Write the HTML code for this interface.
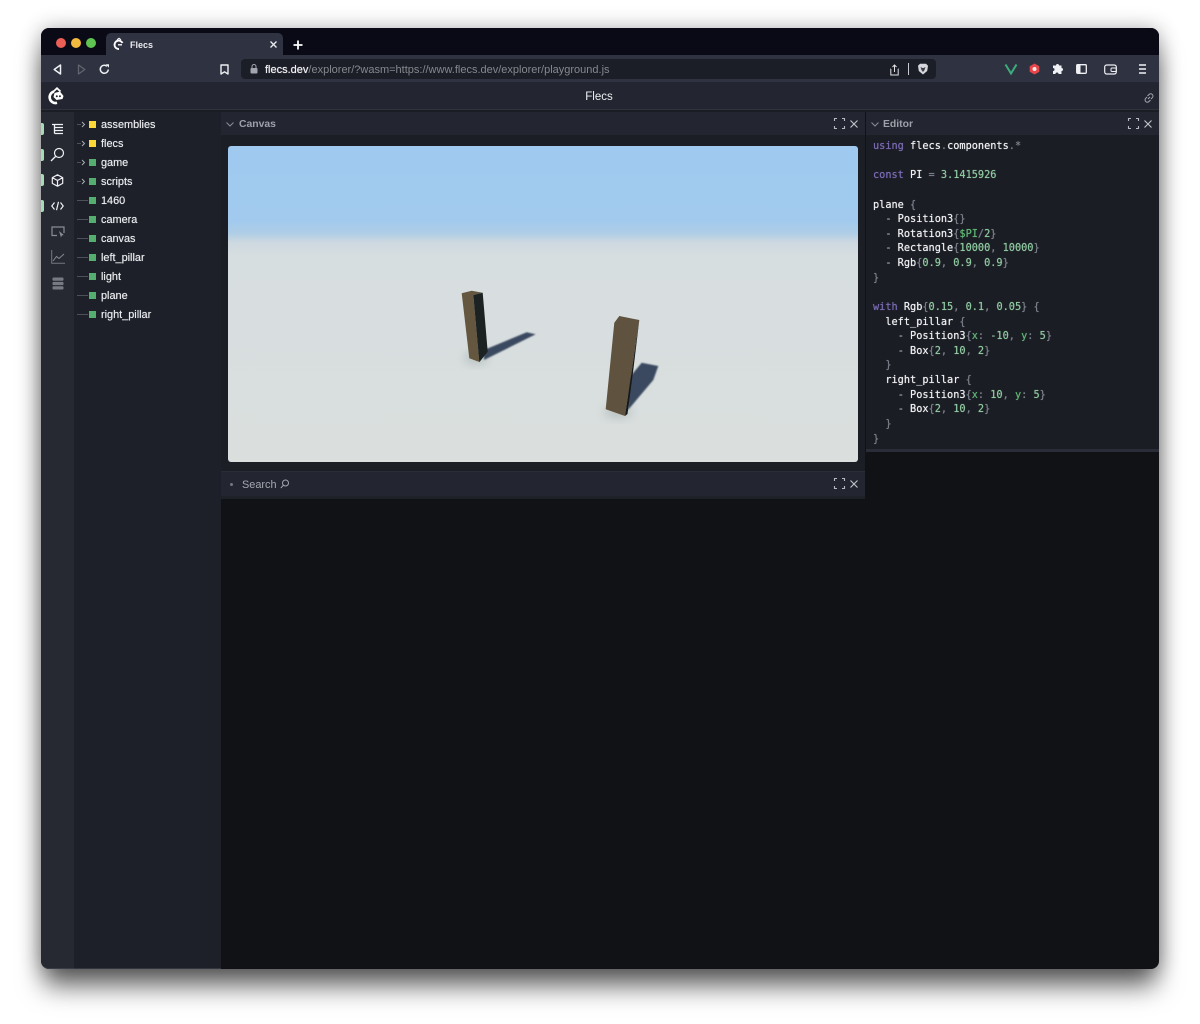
<!DOCTYPE html>
<html><head><meta charset="utf-8"><title>Flecs</title>
<style>
html,body{margin:0;padding:0;width:1200px;height:1024px;overflow:hidden;background:#fff}
*{box-sizing:border-box}
body{font-family:"Liberation Sans",sans-serif;position:relative}
.a{position:absolute}
#win{left:41px;top:28px;width:1118px;height:941px;border-radius:8px;overflow:hidden;background:#111216;box-shadow:0 20px 26px -3px rgba(0,0,0,.6),0 0 20px rgba(0,0,0,.3)}
.t{position:absolute;left:101px;color:#eceef2;font-size:10.9px;line-height:14px;white-space:nowrap;text-shadow:0 0 .6px rgba(236,238,242,.8)}
.sq{position:absolute;left:89px;width:7px;height:7px;background:#56ad70}
.y{background:#fbd738}
.ln{position:absolute;left:77px;width:11px;height:1px;background:#4d505a}
.ind{position:absolute;left:41px;width:3px;height:12px;background:#a5dcb4;border-radius:0 2px 2px 0}
.code{position:absolute;left:873px;top:139px;margin:0;font:10.25px/14.63px "DejaVu Sans Mono","Liberation Mono",monospace;color:#eef0f3;white-space:pre;text-shadow:0 0 .6px currentColor}
.k{color:#7a6bb5}.n{color:#8fc9a0}.g{color:#7d818b}.v{color:#5fb574}.d{color:#a9acb3}
.ph{position:absolute;color:#9ea1aa;font-size:10.4px;font-weight:bold}
svg{position:absolute;overflow:visible}
</style></head>
<body>
<div class="a" id="win"></div>
<!-- chrome -->
<div class="a" style="left:41px;top:28px;width:1118px;height:27px;background:#0a0a16;border-radius:8px 8px 0 0"></div>
<div class="a" style="left:106px;top:33px;width:177px;height:22px;background:#2f3241;border-radius:5px 5px 0 0"></div>
<div class="a" style="left:41px;top:55px;width:1118px;height:27px;background:#2f3241"></div>
<div class="a" style="left:41px;top:82px;width:1118px;height:27px;background:#232630"></div>
<div class="a" style="left:41px;top:109px;width:1118px;height:3px;background:#1b1d24;border-top:1px solid #30333d"></div>
<div class="a" style="left:56px;top:37.500px;width:10px;height:10px;border-radius:50%;background:#ec5f57"></div>
<div class="a" style="left:71px;top:37.500px;width:10px;height:10px;border-radius:50%;background:#f4b93f"></div>
<div class="a" style="left:86px;top:37.500px;width:10px;height:10px;border-radius:50%;background:#5fc452"></div>
<svg style="left:113px;top:38px" width="12" height="13" viewBox="0 0 12 13"><path d="M9.500 5A4.200 4.200 0 1 0 6 11" fill="none" stroke="#fff" stroke-width="1.900"/><path d="M4 1.800l2-1.500 2 1.500" fill="none" stroke="#fff" stroke-width="1.100"/><path d="M5 6.800h4" stroke="#fff" stroke-width="1.300"/></svg>
<div class="a" style="left:130px;top:39px;color:#e9ebef;font-size:9px;font-weight:bold;line-height:13px">Flecs</div>
<svg style="left:270px;top:41px" width="7" height="7"><path d="M.5.500l6 6M6.500.500l-6 6" stroke="#eceef2" stroke-width="1.300"/></svg>
<svg style="left:293px;top:40px" width="10" height="10"><path d="M5 .5v9M.5 5h9" stroke="#fff" stroke-width="1.800"/></svg>
<!-- nav icons -->
<svg style="left:53px;top:64px" width="9" height="11"><path d="M7.500 1L1.200 5.500 7.500 10z" fill="none" stroke="#eef0f3" stroke-width="1.500" stroke-linejoin="round"/></svg>
<svg style="left:77px;top:64px" width="9" height="11"><path d="M1.500 1L7.800 5.500 1.500 10z" fill="none" stroke="#62656f" stroke-width="1.300" stroke-linejoin="round"/></svg>
<svg style="left:99px;top:64px" width="11" height="11"><path d="M9.300 5.500A4 4 0 1 1 8 2.300" fill="none" stroke="#eef0f3" stroke-width="1.500"/><path d="M6.800 .3h3.200v3.400z" fill="#eef0f3"/></svg>
<svg style="left:220px;top:64px" width="9" height="11"><path d="M1 1h7v9L4.500 7.800 1 10z" fill="none" stroke="#eef0f3" stroke-width="1.400" stroke-linejoin="round"/></svg>
<div class="a" style="left:241px;top:59px;width:695px;height:20px;background:#1c1e27;border-radius:4px"></div>
<svg style="left:250px;top:64px" width="8" height="10"><rect x=".5" y="4" width="7" height="5.500" rx="1" fill="#a2a5ad"/><path d="M2 4V2.500a2 2 0 0 1 4 0V4" fill="none" stroke="#a2a5ad"/></svg>
<div class="a" style="left:265px;top:63px;font-size:11px;line-height:14px;color:#85888f;white-space:nowrap"><span style="color:#f0f1f4;text-shadow:0 0 .6px #f0f1f4">flecs.dev</span>/explorer/?wasm=https://www.flecs.dev/explorer/playground.js</div>
<svg style="left:890px;top:64px" width="9" height="12"><path d="M1 5H.8v6h7.400V5H8M4.500 8V1M2.500 3l2-2 2 2" fill="none" stroke="#dfe1e5" stroke-width="1"/></svg>
<div class="a" style="left:908px;top:63px;width:1px;height:12px;background:#c9cbd0"></div>
<svg style="left:917px;top:63px" width="12" height="12"><path d="M3 .7h6l2 2-.8 5.300L6 11.500 1.800 8 1 2.700z" fill="#d5d7dc"/><path d="M3.500 4l2 1h1l2-1-1 3-1.500 2-1.500-2z" fill="#3a3d48"/></svg>
<svg style="left:1005px;top:64px" width="12" height="10"><path d="M.5.500L6 9.500 11.500.500" fill="none" stroke="#3dad7c" stroke-width="2"/></svg>
<svg style="left:1029px;top:63px" width="11" height="12"><path d="M5.500.5l4.800 2.800v5.400L5.500 11.500.7 8.700V3.300z" fill="#e7474a"/><circle cx="5.500" cy="6" r="2" fill="#f4e9e6"/></svg>
<svg style="left:1052px;top:63px" width="12" height="12"><path d="M4 2.500a1.500 1.500 0 0 1 3 0h2.500V5a1.500 1.500 0 0 1 0 3v3H6.500a1.500 1.500 0 0 0-3 0H1V8a1.500 1.500 0 0 0 0-3V2.500z" fill="#f0f1f4"/></svg>
<svg style="left:1076px;top:64px" width="11" height="10"><rect x=".7" y=".7" width="9.600" height="8.600" rx="1" fill="none" stroke="#f0f1f4" stroke-width="1.300"/><rect x="1" y="1" width="3.500" height="8" fill="#f0f1f4"/></svg>
<svg style="left:1104px;top:64px" width="13" height="11"><rect x=".7" y="1" width="11.600" height="9" rx="2" fill="none" stroke="#eef0f3" stroke-width="1.200"/><rect x="7" y="4" width="5.300" height="3.500" rx="1" fill="none" stroke="#eef0f3"/></svg>
<svg style="left:1138px;top:64px" width="9" height="10"><path d="M1 1h7M1 5h7M1 9h7" stroke="#f0f1f4" stroke-width="1.500"/></svg>
<!-- app header -->
<svg style="left:49px;top:87px" width="16" height="18" viewBox="0 0 16 18"><path d="M5 4.500A5.700 5.700 0 0 0 8 15.800" fill="none" stroke="#fff" stroke-width="2.600"/><path d="M4.500 4.500L8 1.200l3.500 3.300" fill="none" stroke="#fff" stroke-width="1.800"/><path d="M11 4.500l3.500 4.500-1 3-6 1-3-3 1-4z" fill="#fff"/><circle cx="7.800" cy="9.300" r="1" fill="#232630"/><circle cx="10.900" cy="9.300" r="1" fill="#232630"/></svg>
<div class="a" style="left:0;width:1198px;top:90px;text-align:center;color:#eceef2;font-size:11.500px;line-height:14px">Flecs</div>
<svg style="left:1143px;top:92px" width="12" height="12" viewBox="0 0 12 12"><path d="M5 7l2-2M4.500 4L6 2.500a2 2 0 0 1 3.300 3.200L8 7M7.500 8L6 9.500a2 2 0 0 1-3.300-3.200L4 5" fill="none" stroke="#a5a8b0" stroke-width="1"/></svg>
<!-- left rail -->
<div class="a" style="left:41px;top:112px;width:33px;height:857px;background:#262932;border-bottom-left-radius:8px;border-bottom:1px solid #3a3d47"></div>
<div class="ind" style="top:123px"></div><div class="ind" style="top:149px"></div><div class="ind" style="top:174px"></div><div class="ind" style="top:200px"></div>
<svg style="left:51px;top:123px" width="13" height="13"><path d="M1 1.500h11M3.500 4.500H12M3.500 7.500H12M3.500 10.500H12M3.500 1.500v9" fill="none" stroke="#eef0f3" stroke-width="1.300"/></svg>
<svg style="left:50px;top:147px" width="15" height="15"><circle cx="9" cy="6" r="4.500" fill="none" stroke="#eef0f3" stroke-width="1.200"/><path d="M5.500 9.500L1 14" stroke="#eef0f3" stroke-width="1.300"/></svg>
<svg style="left:51px;top:174px" width="13" height="13"><path d="M6.500.8l5.200 2.800v5.800l-5.200 2.800-5.200-2.800V3.600zM1.300 3.600l5.200 2.900 5.200-2.900M6.500 6.500v5.700" fill="none" stroke="#eef0f3" stroke-width="1.200" stroke-linejoin="round"/></svg>
<svg style="left:51px;top:201px" width="13" height="10"><path d="M3.500 1.500L.8 5l2.700 3.500M9.500 1.500L12.200 5 9.500 8.500M7.500.8L5.500 9.200" fill="none" stroke="#eef0f3" stroke-width="1.200"/></svg>
<svg style="left:51px;top:226px" width="14" height="13"><path d="M6 9.500H1V1h12v6" fill="none" stroke="#8a8d95" stroke-width="1.200"/><path d="M8 5l4.800 4-2 .5-.8 2z" fill="#8a8d95"/></svg>
<svg style="left:51px;top:250px" width="14" height="14"><path d="M.7 0v13.300H14" fill="none" stroke="#75787f" stroke-width="1"/><path d="M2 11l3.500-4.500 2.500 2L13 4" fill="none" stroke="#85888f" stroke-width="1"/></svg>
<svg style="left:52px;top:277px" width="12" height="13"><rect x=".5" y=".5" width="11" height="3.200" rx="1" fill="#777a82"/><rect x=".5" y="4.900" width="11" height="3.200" rx="1" fill="#777a82"/><rect x=".5" y="9.300" width="11" height="3.200" rx="1" fill="#777a82"/></svg>
<!-- tree -->
<div class="a" style="left:74px;top:112px;width:147px;height:857px;background:#1d2028;border-bottom:1px solid #33363f"></div>
<svg style="left:77px;top:121px" width="11" height="7"><path d="M0 3.500h4" stroke="#4d505a"/><path d="M5 1l2.500 2.500L5 6" fill="none" stroke="#a9acb3"/></svg>
<svg style="left:77px;top:140px" width="11" height="7"><path d="M0 3.500h4" stroke="#4d505a"/><path d="M5 1l2.500 2.500L5 6" fill="none" stroke="#a9acb3"/></svg>
<svg style="left:77px;top:159px" width="11" height="7"><path d="M0 3.500h4" stroke="#4d505a"/><path d="M5 1l2.500 2.500L5 6" fill="none" stroke="#a9acb3"/></svg>
<svg style="left:77px;top:178px" width="11" height="7"><path d="M0 3.500h4" stroke="#4d505a"/><path d="M5 1l2.500 2.500L5 6" fill="none" stroke="#a9acb3"/></svg>
<div class="sq y" style="top:120.500px"></div><div class="t" style="top:117.500px">assemblies</div>
<div class="sq y" style="top:139.500px"></div><div class="t" style="top:136.500px">flecs</div>
<div class="sq" style="top:158.500px"></div><div class="t" style="top:155.500px">game</div>
<div class="sq" style="top:177.500px"></div><div class="t" style="top:174.500px">scripts</div>
<div class="ln" style="top:200px"></div><div class="sq" style="top:196.500px"></div><div class="t" style="top:193.500px">1460</div>
<div class="ln" style="top:219px"></div><div class="sq" style="top:215.500px"></div><div class="t" style="top:212.500px">camera</div>
<div class="ln" style="top:238px"></div><div class="sq" style="top:234.500px"></div><div class="t" style="top:231.500px">canvas</div>
<div class="ln" style="top:257px"></div><div class="sq" style="top:253.500px"></div><div class="t" style="top:250.500px">left_pillar</div>
<div class="ln" style="top:276px"></div><div class="sq" style="top:272.500px"></div><div class="t" style="top:269.500px">light</div>
<div class="ln" style="top:295px"></div><div class="sq" style="top:291.500px"></div><div class="t" style="top:288.500px">plane</div>
<div class="ln" style="top:314px"></div><div class="sq" style="top:310.500px"></div><div class="t" style="top:307.500px">right_pillar</div>
<!-- canvas panel -->
<div class="a" style="left:221px;top:112px;width:644px;height:23px;background:#232630"></div>
<div class="a" style="left:221px;top:135px;width:644px;height:336px;background:#1c1e25"></div>
<svg style="left:226px;top:122px" width="8" height="5"><path d="M.5.500L4 4 7.500.500" fill="none" stroke="#8a8d95"/></svg>
<div class="ph" style="left:239px;top:118px;line-height:14px">Canvas</div>
<svg style="left:834px;top:118px" width="11" height="11"><path d="M.5 3V.5H3M8 .5h2.500V3M10.500 8v2.500H8M3 10.500H.5V8" fill="none" stroke="#b5b8bf" stroke-width="1.100"/></svg>
<svg style="left:850px;top:120px" width="8" height="8"><path d="M.5.500l7 7M7.500.500l-7 7" stroke="#c2c5cb" stroke-width="1.100"/></svg>
<svg style="left:228px;top:146px;border-radius:3px" width="630" height="316" viewBox="228 146 630 316">
<defs>
<linearGradient id="bg" x1="0" y1="0" x2="0" y2="1"><stop offset="0" stop-color="#9fc9ef"/><stop offset=".235" stop-color="#a1caee"/><stop offset=".275" stop-color="#aecde6"/><stop offset=".305" stop-color="#cdd8e0"/><stop offset=".35" stop-color="#d7dee0"/><stop offset="1" stop-color="#dadfdd"/></linearGradient>
<filter id="b" x="-20%" y="-20%" width="140%" height="140%"><feGaussianBlur stdDeviation=".9"/></filter>
<filter id="b2" x="-50%" y="-50%" width="200%" height="200%"><feGaussianBlur stdDeviation="5"/></filter>
<clipPath id="cl"><rect x="228" y="146" width="630" height="316" rx="3"/></clipPath>
</defs>
<g clip-path="url(#cl)">
<rect x="228" y="146" width="630" height="316" fill="url(#bg)"/>
<ellipse cx="476" cy="358" rx="12" ry="6" fill="#8f9a9b" opacity=".45" filter="url(#b2)"/>
<ellipse cx="618" cy="412" rx="14" ry="6" fill="#8f9a9b" opacity=".45" filter="url(#b2)"/>
<path d="M484 350L526.700 332.300 535.700 334.300 484 360z" fill="#3b4a60" filter="url(#b)"/>
<path d="M629 378L641.700 362.700 658.300 366 653.300 380 628 410z" fill="#3a4a60" filter="url(#b)"/>
<path d="M461.700 293.300L471.700 290.700 482.700 292.700 473.300 295 479.300 362 469.300 358.300z" fill="#64563f"/>
<path d="M473.300 295L482.700 292.700 487.700 351.700 479.300 362.300z" fill="#1c2222"/>
<path d="M614.300 322.700L619.300 316 639.300 320 625 416 605.700 409.300z" fill="#5f523e"/>
<path d="M639.300 320L625 416 627.500 414 633.300 370z" fill="#15191a"/>
</g>
</svg>
<!-- search header -->
<div class="a" style="left:221px;top:471px;width:644px;height:1px;background:#2a2d37"></div>
<div class="a" style="left:221px;top:472px;width:644px;height:24px;background:#232630"></div>
<div class="a" style="left:221px;top:496px;width:644px;height:3px;background:#1f2129"></div>
<div class="a" style="left:230px;top:483px;width:3px;height:3px;border-radius:50%;background:#75787f"></div>
<div class="ph" style="left:242px;top:478px;line-height:14px;font-weight:normal;font-size:10.900px;color:#a5a8b0">Search</div>
<svg style="left:280px;top:479px" width="9" height="10"><circle cx="5.500" cy="4" r="3" fill="none" stroke="#a5a8b0"/><path d="M3.500 6.200L.8 9" stroke="#a5a8b0"/></svg>
<svg style="left:834px;top:478px" width="11" height="11"><path d="M.5 3V.5H3M8 .5h2.500V3M10.500 8v2.500H8M3 10.500H.5V8" fill="none" stroke="#b5b8bf" stroke-width="1.100"/></svg>
<svg style="left:850px;top:480px" width="8" height="8"><path d="M.5.500l7 7M7.500.500l-7 7" stroke="#c2c5cb" stroke-width="1.100"/></svg>
<!-- editor -->
<div class="a" style="left:866px;top:112px;width:293px;height:23px;background:#232630"></div>
<div class="a" style="left:866px;top:135px;width:293px;height:314px;background:#1b1d24"></div>
<div class="a" style="left:866px;top:449px;width:293px;height:3px;background:#2a2d37"></div>
<svg style="left:871px;top:122px" width="8" height="5"><path d="M.5.500L4 4 7.500.500" fill="none" stroke="#8a8d95"/></svg>
<div class="ph" style="left:883px;top:118px;line-height:14px">Editor</div>
<svg style="left:1128px;top:118px" width="11" height="11"><path d="M.5 3V.5H3M8 .5h2.500V3M10.500 8v2.500H8M3 10.500H.5V8" fill="none" stroke="#b5b8bf" stroke-width="1.100"/></svg>
<svg style="left:1144px;top:120px" width="8" height="8"><path d="M.5.500l7 7M7.500.500l-7 7" stroke="#c2c5cb" stroke-width="1.100"/></svg>
<pre class="code"><span class="k">using</span> flecs<span class="g">.</span>components<span class="g">.*</span>

<span class="k">const</span> PI <span class="g">=</span> <span class="n">3.1415926</span>

plane <span class="g">{</span>
  <span class="d">-</span> Position3<span class="g">{}</span>
  <span class="d">-</span> Rotation3<span class="g">{</span><span class="v">$PI</span><span class="g">/</span><span class="n">2</span><span class="g">}</span>
  <span class="d">-</span> Rectangle<span class="g">{</span><span class="n">10000</span><span class="g">,</span> <span class="n">10000</span><span class="g">}</span>
  <span class="d">-</span> Rgb<span class="g">{</span><span class="n">0.9</span><span class="g">,</span> <span class="n">0.9</span><span class="g">,</span> <span class="n">0.9</span><span class="g">}</span>
<span class="g">}</span>

<span class="k">with</span> Rgb<span class="g">{</span><span class="n">0.15</span><span class="g">,</span> <span class="n">0.1</span><span class="g">,</span> <span class="n">0.05</span><span class="g">} {</span>
  left_pillar <span class="g">{</span>
    <span class="d">-</span> Position3<span class="g">{</span><span class="v">x</span><span class="g">:</span> <span class="n">-10</span><span class="g">,</span> <span class="v">y</span><span class="g">:</span> <span class="n">5</span><span class="g">}</span>
    <span class="d">-</span> Box<span class="g">{</span><span class="n">2</span><span class="g">,</span> <span class="n">10</span><span class="g">,</span> <span class="n">2</span><span class="g">}</span>
  <span class="g">}</span>
  right_pillar <span class="g">{</span>
    <span class="d">-</span> Position3<span class="g">{</span><span class="v">x</span><span class="g">:</span> <span class="n">10</span><span class="g">,</span> <span class="v">y</span><span class="g">:</span> <span class="n">5</span><span class="g">}</span>
    <span class="d">-</span> Box<span class="g">{</span><span class="n">2</span><span class="g">,</span> <span class="n">10</span><span class="g">,</span> <span class="n">2</span><span class="g">}</span>
  <span class="g">}</span>
<span class="g">}</span></pre>
</body></html>
